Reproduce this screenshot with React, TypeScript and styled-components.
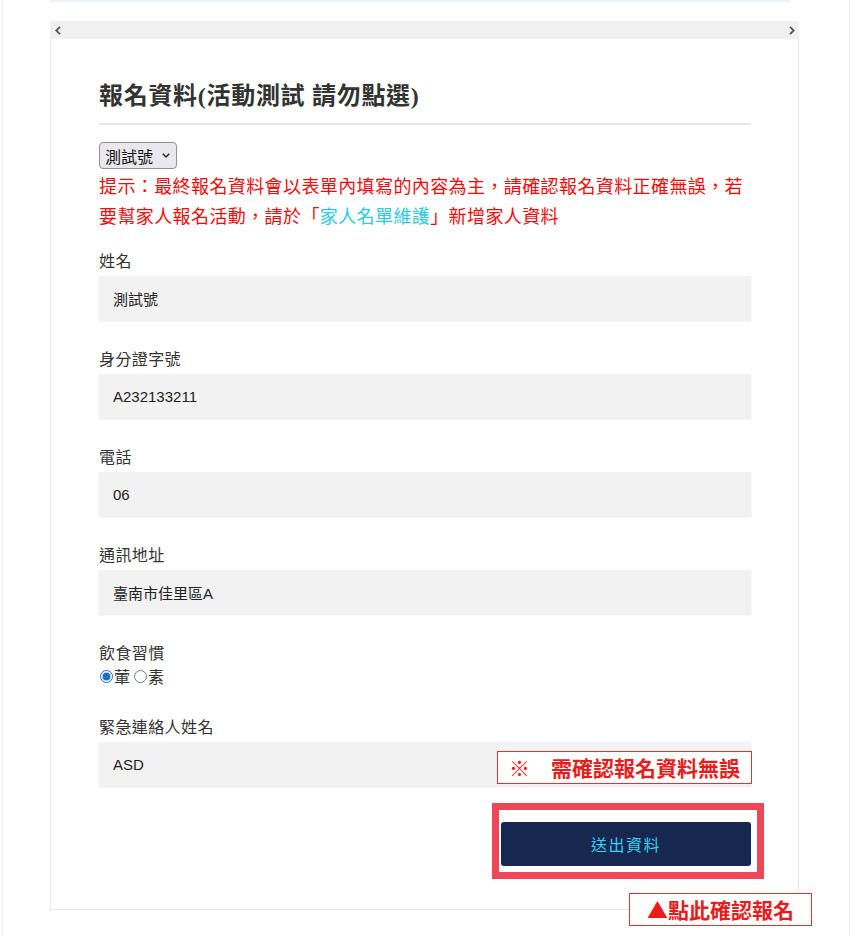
import React from 'react';
import styled, { createGlobalStyle } from 'styled-components';

const Global = createGlobalStyle`
  html, body { margin: 0; padding: 0; background: #fff; }
  body {
    font-family: "Liberation Sans", "Noto Sans CJK TC", sans-serif;
  }
  * { box-sizing: border-box; }
`;

const Frame = styled.div`
  margin-left: 2px;
  width: 848px;
  min-height: 935px;
  border-left: 1px solid #ececec;
  border-right: 1px solid #ececec;
  padding-left: 47px;
`;

const TopStrip = styled.div`
  width: 740px;
  height: 2px;
  background: #eef2f7;
  margin-bottom: 19px;
`;

const ScrollBar = styled.div`
  width: 749px;
  height: 18px;
  background: #f0f0f0;
  display: flex;
  align-items: center;
  justify-content: space-between;
  padding: 0 4px 0 5px;
`;

const Card = styled.div`
  width: 749px;
  border: 1px solid #e6e6e6;
  border-top: none;
  padding: 39px 47px 43px 48px;
`;

const Title = styled.h2`
  margin: 0;
  font-family: "Liberation Serif", "Noto Sans CJK TC", serif;
  font-size: 24px;
  font-weight: bold;
  letter-spacing: 0.7px;
  line-height: 36px;
  color: #333;
  padding-bottom: 9px;
  border-bottom: 2px solid #e8e8e8;
`;

const SelectWrap = styled.div`
  position: relative;
  margin-top: 17px;
  width: 78px;
  height: 27px;
`;

const Select = styled.select`
  appearance: none;
  -webkit-appearance: none;
  width: 78px;
  height: 27px;
  background: #e9e9ed;
  border: 1px solid #8f8f9d;
  border-radius: 4px;
  padding: 0 18px 0 5px;
  font-family: "Noto Sans CJK TC", sans-serif;
  font-size: 16px;
  color: #111;
  outline: none;
`;

const SelectChevron = styled.svg`
  position: absolute;
  right: 7px;
  top: 11px;
  pointer-events: none;
`;

const Hint = styled.p`
  margin: 1px 0 18px;
  font-family: "Noto Sans CJK TC", sans-serif;
  font-size: 18px;
  letter-spacing: 0.4px;
  line-height: 30px;
  color: #f20a0a;
`;

const HintLink = styled.a`
  color: #2cc8e8;
  text-decoration: none;
`;

const Field = styled.div<{ $last?: boolean }>`
  position: relative;
  margin-bottom: ${p => (p.$last ? '0' : '26px')};
`;

const Label = styled.div<{ $tight?: boolean }>`
  font-family: "Noto Sans CJK TC", sans-serif;
  font-size: 16px;
  letter-spacing: 0.4px;
  line-height: 24px;
  color: #333;
  margin-bottom: ${p => (p.$tight ? '0' : '4px')};
`;

const Input = styled.input`
  display: block;
  width: 100%;
  height: 44px;
  background: #f2f2f2;
  border: none;
  padding: 0 14px;
  font-family: "Liberation Sans", "Noto Sans CJK TC", sans-serif;
  font-size: 15px;
  color: #222;
  box-shadow: 0 1px 2px rgba(0, 0, 0, 0.09);
  outline: none;
`;

const RadioRow = styled.div`
  display: flex;
  align-items: center;
  gap: 3px;
  height: 24px;
  font-family: "Noto Sans CJK TC", sans-serif;
  font-size: 16px;
  color: #333;
`;

const RadioLabel = styled.label`
  display: inline-flex;
  align-items: center;
`;

const Radio = styled.input`
  width: 13px;
  height: 13px;
  margin: 0 1px 0 1px;
  accent-color: #1a6fd6;
`;

const ButtonRow = styled.div`
  position: relative;
  margin-top: 36px;
  display: flex;
  justify-content: flex-end;
`;

const SubmitButton = styled.button`
  width: 250px;
  height: 44px;
  background: #162850;
  color: #3ad0f0;
  border: none;
  border-radius: 3px;
  font-family: "Noto Sans CJK TC", sans-serif;
  font-size: 16px;
  letter-spacing: 1.5px;
`;

const Note = styled.div<{ $w: number }>`
  position: absolute;
  width: ${p => p.$w}px;
  height: 33px;
  background: #fff;
  border: 1px solid #e0303a;
  color: #ea1b1b;
  font-family: "Noto Sans CJK TC", sans-serif;
  font-weight: bold;
  font-size: 21px;
  line-height: 31px;
  text-align: center;
  white-space: nowrap;
`;

const ConfirmNote = styled(Note)`
  right: -1px;
  top: 37px;
`;

const ClickNote = styled(Note)`
  right: -61px;
  top: 71px;
`;

const RedFrame = styled.div`
  position: absolute;
  right: -13px;
  top: -19px;
  width: 272px;
  height: 76px;
  border: 7px solid #ef4757;
  pointer-events: none;
`;

const Chevron = ({ dir }: { dir: 'left' | 'right' }) => (
  <svg width="6" height="9" viewBox="0 0 6 9">
    <polyline
      points={dir === 'left' ? '5,0.8 1.2,4.5 5,8.2' : '1,0.8 4.8,4.5 1,8.2'}
      fill="none"
      stroke="#555"
      strokeWidth="1.8"
    />
  </svg>
);

export default function App() {
  return (
    <>
      <Global />
      <Frame>
        <TopStrip />
        <ScrollBar>
          <Chevron dir="left" />
          <Chevron dir="right" />
        </ScrollBar>
        <Card>
          <Title>報名資料(活動測試 請勿點選)</Title>
          <SelectWrap>
            <Select defaultValue="a">
              <option value="a">測試號</option>
            </Select>
            <SelectChevron width="8" height="5" viewBox="0 0 8 5">
              <polyline points="0.8,0.8 4,4 7.2,0.8" fill="none" stroke="#222" strokeWidth="1.4" />
            </SelectChevron>
          </SelectWrap>
          <Hint lang="zh-Hant">
            提示：最終報名資料會以表單內填寫的內容為主，請確認報名資料正確無誤，若要幫家人報名活動，請於「<HintLink href="#">家人名單維護</HintLink>」新增家人資料
          </Hint>
          <Field>
            <Label>姓名</Label>
            <Input defaultValue="測試號" />
          </Field>
          <Field>
            <Label>身分證字號</Label>
            <Input defaultValue="A232133211" />
          </Field>
          <Field>
            <Label>電話</Label>
            <Input defaultValue="06" />
          </Field>
          <Field>
            <Label>通訊地址</Label>
            <Input defaultValue="臺南市佳里區A" />
          </Field>
          <Field>
            <Label $tight>飲食習慣</Label>
            <RadioRow>
              <RadioLabel>
                <Radio type="radio" name="diet" defaultChecked />葷
              </RadioLabel>
              <RadioLabel>
                <Radio type="radio" name="diet" />素
              </RadioLabel>
            </RadioRow>
          </Field>
          <Field $last>
            <Label>緊急連絡人姓名</Label>
            <Input defaultValue="ASD" />
            <ConfirmNote $w={255}>※　需確認報名資料無誤</ConfirmNote>
          </Field>
          <ButtonRow>
            <SubmitButton type="button">送出資料</SubmitButton>
            <RedFrame />
            <ClickNote $w={183}>▲點此確認報名</ClickNote>
          </ButtonRow>
        </Card>
      </Frame>
    </>
  );
}
